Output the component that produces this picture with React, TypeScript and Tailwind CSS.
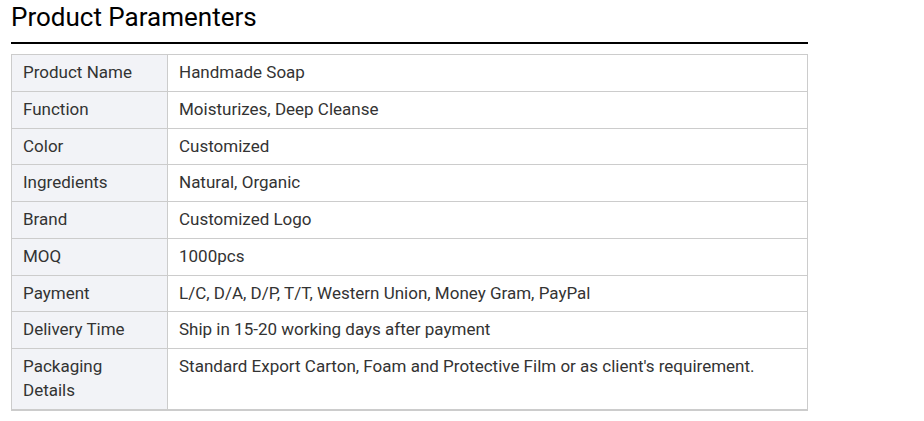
const ROWS: [string, string][] = [
  ['Product Name', 'Handmade Soap'],
  ['Function', 'Moisturizes, Deep Cleanse'],
  ['Color', 'Customized'],
  ['Ingredients', 'Natural, Organic'],
  ['Brand', 'Customized Logo'],
  ['MOQ', '1000pcs'],
  ['Payment', 'L/C, D/A, D/P, T/T, Western Union, Money Gram, PayPal'],
  ['Delivery Time', 'Ship in 15-20 working days after payment'],
  ['Packaging Details', "Standard Export Carton, Foam and Protective Film or as client's requirement."],
];

export default function App() {
  return (
    <div className="w-[924px] h-[421px] bg-white pl-[11px] pt-[1px] font-['Roboto',sans-serif]">
      <div className="w-[797px]">
        <h2 className="text-[26px] leading-[32px] text-black pb-[9px] border-b-2 border-black">
          Product Paramenters
        </h2>
        <table className="mt-[10px] w-full border-collapse border border-[#cccccc] border-b-2 text-[17px] leading-[23.75px] text-[#333333]">
          <tbody>
            {ROWS.map(([k, v]) => (
              <tr key={k}>
                <td className="w-[156px] bg-[#f2f3f7] border border-[#cccccc] px-[11px] py-[6px] align-top">
                  {k}
                </td>
                <td className="border border-[#cccccc] px-[11px] py-[6px] align-top">{v}</td>
              </tr>
            ))}
          </tbody>
        </table>
      </div>
    </div>
  );
}
